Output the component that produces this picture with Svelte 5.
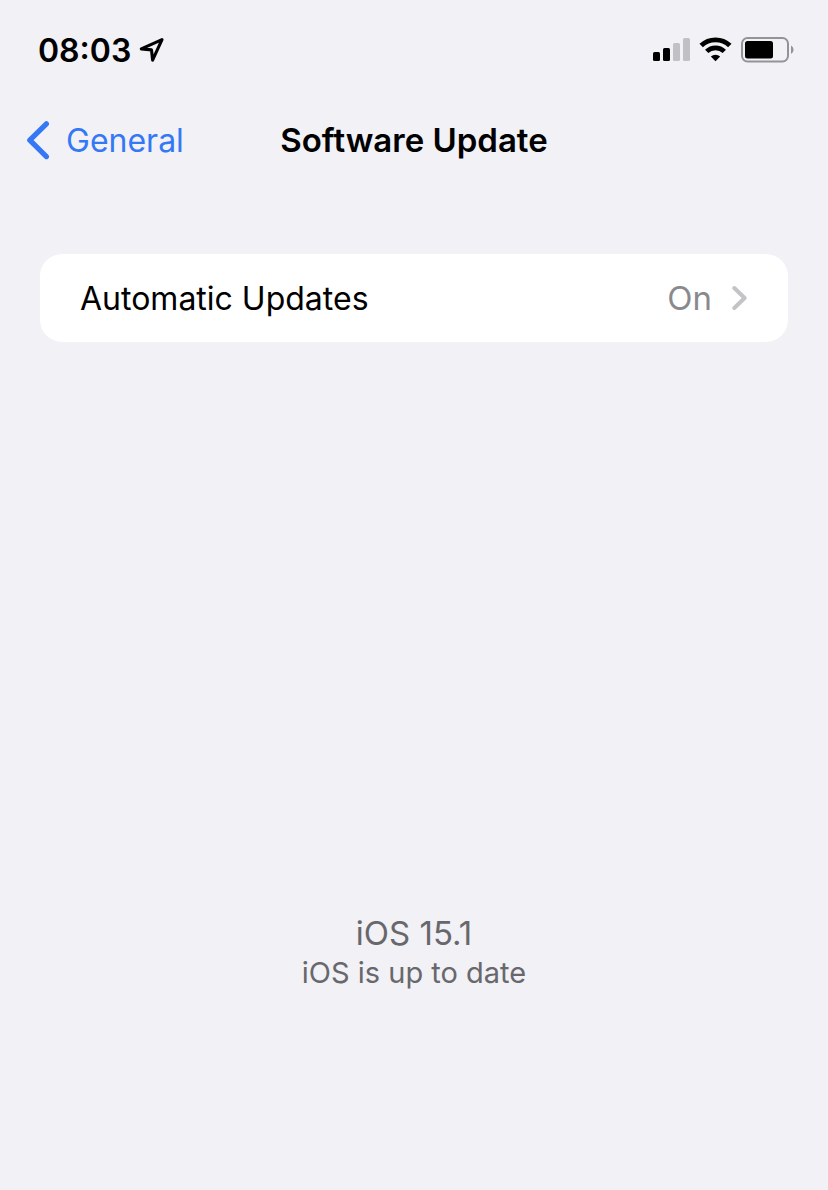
<script>
  const time = '08:03';
  const version = 'iOS 15.1';
</script>

<div class="screen">
  <header class="status-bar">
    <div class="clock">
      <span>{time}</span>
      <svg width="26" height="26" viewBox="0 0 26 26" aria-hidden="true">
        <path d="M23 2.6 L2.3 11.9 L12.5 12.9 L13.6 23.1 Z" fill="none" stroke="#000" stroke-width="3.1" stroke-linejoin="round" />
      </svg>
    </div>
    <div class="indicators">
      <svg width="37" height="26" viewBox="0 0 37 26" aria-hidden="true">
        <rect x="0" y="15" width="7" height="9" rx="1.5" />
        <rect x="10" y="11" width="7" height="13" rx="1.5" />
        <rect x="20" y="6" width="7" height="18" rx="1.5" fill="#c1c1c5" />
        <rect x="30" y="1" width="7" height="23" rx="1.5" fill="#c1c1c5" />
      </svg>
      <svg width="33" height="26" viewBox="0 0 33 26" aria-hidden="true">
        <path d="M2.2 8.6 A20.6 20.6 0 0 1 30.8 8.6" fill="none" stroke="#000" stroke-width="4.9" />
        <path d="M7.7 14.4 A12.6 12.6 0 0 1 25.3 14.4" fill="none" stroke="#000" stroke-width="4.7" />
        <path d="M16.5 24.2 L11.8 19.5 A7 7 0 0 1 21.2 19.5 Z" />
      </svg>
      <svg width="53" height="26" viewBox="0 0 53 26" aria-hidden="true">
        <rect x="1" y="1" width="46" height="23.5" rx="5.5" fill="none" stroke="#949498" stroke-width="2" />
        <rect x="4" y="4" width="28" height="17.5" rx="2.5" />
        <path d="M50 8.5 A4.8 4.8 0 0 1 50 17 Z" fill="#949498" />
      </svg>
    </div>
  </header>

  <nav class="nav-bar">
    <a class="back" href="#general">
      <svg width="24" height="40" viewBox="0 0 24 40" aria-hidden="true">
        <path d="M20.4 3.8 L3.8 20.2 L20.4 36.6" fill="none" stroke="#3478f6" stroke-width="5.2" stroke-linecap="round" stroke-linejoin="round" />
      </svg>
      <span>General</span>
    </a>
    <h1>Software Update</h1>
  </nav>

  <main>
    <button class="row" type="button">
      <span class="label">Automatic Updates</span>
      <span class="value">On</span>
      <svg width="16" height="26" viewBox="0 0 16 26" aria-hidden="true">
        <path d="M2.3 3 L12.6 13 L2.3 23" fill="none" stroke="#c4c4c6" stroke-width="4" stroke-linecap="round" stroke-linejoin="round" />
      </svg>
    </button>

    <section class="summary">
      <p class="version">{version}</p>
      <p class="state">iOS is up to date</p>
    </section>
  </main>
</div>

<style>
  :global(body) {
    margin: 0;
    background: #f1f1f6;
  }

  .screen {
    box-sizing: border-box;
    min-height: 100vh;
    background: #f1f1f6;
    color: #000;
    font-family: Inter, 'Liberation Sans', sans-serif;
    font-size: 32px;
    line-height: 41px;
  }

  svg {
    display: block;
    flex: none;
  }

  .status-bar {
    display: flex;
    align-items: center;
    justify-content: space-between;
    height: 100px;
    padding: 0 34px 0 38px;
    box-sizing: border-box;
  }

  .clock {
    display: flex;
    align-items: center;
    gap: 8px;
    font-weight: 600;
  }

  .indicators {
    display: flex;
    align-items: center;
    gap: 9px;
  }

  .nav-bar {
    display: grid;
    grid-template-columns: 1fr auto 1fr;
    align-items: center;
    height: 80px;
    padding: 0 26px;
  }

  .back {
    display: flex;
    align-items: center;
    gap: 16px;
    color: #3478f6;
    text-decoration: none;
  }

  h1 {
    margin: 0;
    font-size: 33px;
    line-height: 40px;
    font-weight: 600;
  }

  main {
    padding: 74px 40px 0;
  }

  .row {
    display: flex;
    align-items: center;
    width: 100%;
    min-height: 88px;
    padding: 0 40px;
    border: 0;
    border-radius: 22px;
    background: #fff;
    color: inherit;
    font: inherit;
    text-align: left;
  }

  .label {
    flex: 1;
  }

  .value {
    margin-right: 20px;
    color: #8a8a8e;
    font-size: 33px;
  }

  .summary {
    margin-top: 571px;
    color: #68686c;
    line-height: 40px;
    text-align: center;
  }

  .summary p {
    margin: 0;
  }

  .version {
    font-size: 33px;
  }

  .state {
    font-size: 29px;
  }
</style>
